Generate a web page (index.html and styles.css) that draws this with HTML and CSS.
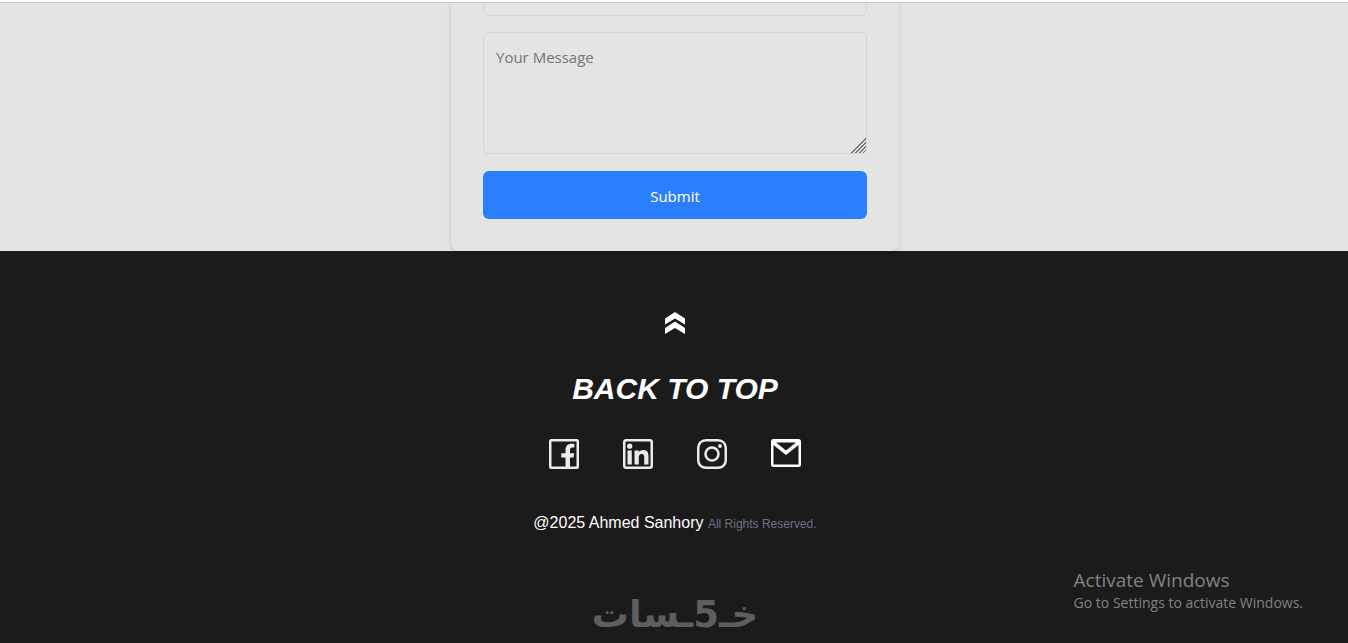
FILE: index.html
```html
<!DOCTYPE html>
<html lang="en">
<head>
<meta charset="utf-8">
<title>Contact</title>
<link rel="stylesheet" href="styles.css">
</head>
<body>
<div class="top-bar"></div>
<main class="contact">
  <form class="card">
    <input class="field" type="email" aria-label="Email">
    <textarea class="field message" placeholder="Your Message" aria-label="Your Message"></textarea>
    <button class="submit" type="submit">Submit</button>
  </form>
</main>
<footer class="footer">
  <a class="back" href="#">
    <svg class="chevrons" viewBox="0 0 20 22" aria-hidden="true"><path d="M0 6.500 10 0l10 6.500V12.500L10 6.500 0 12.500zM0 16 10 9.500 20 16v6l-10-6L0 22z"/></svg>
    <span class="back-title">BACK TO TOP</span>
  </a>
  <nav class="social" aria-label="Social links">
    <a href="#" aria-label="Facebook"><svg viewBox="0 0 30 30"><rect class="line" x="1.250" y="1.250" width="27.500" height="27.500" rx="1"/><path d="M16.500 29V18.500H12.300v-4.300h4.200v-3.400c0-4 2.300-6.100 6-6.100 1 0 2 .1 2.900.2v3.700h-2.100c-1.800 0-2.300 1-2.300 2.300v3.300h4.200l-.6 4.300H21V29z"/></svg></a>
    <a href="#" aria-label="LinkedIn"><svg viewBox="0 0 30 30"><rect class="line" x="1.250" y="1.250" width="27.500" height="27.500" rx="2"/><circle cx="6.700" cy="7.200" r="2.600"/><path d="M4.500 11.500h4.300V25.500H4.500zM11.500 11.500h4.200v1.900c.8-1.400 2.300-2.300 4.400-2.300 4.300 0 5.400 2.700 5.400 6.700v7.700h-4.300v-6.900c0-2-.3-3.700-2.500-3.700s-2.900 1.600-2.900 3.600v7h-4.300z"/></svg></a>
    <a href="#" aria-label="Instagram"><svg viewBox="0 0 30 30"><rect class="line" x="1.250" y="1.250" width="27.500" height="27.500" rx="7.500"/><circle class="line" cx="15" cy="15" r="6.500"/><circle cx="23" cy="7" r="1.900"/></svg></a>
    <a class="mail" href="#" aria-label="Email"><svg viewBox="0 0 30 30"><path fill-rule="evenodd" d="M2.500 0h25A2.500 2.500 0 0 1 30 2.500v23a2.500 2.500 0 0 1-2.500 2.500h-25A2.500 2.500 0 0 1 0 25.500v-23A2.500 2.500 0 0 1 2.500 0zM5 3.500 15 11.500 25 3.500zM2.500 6v19.500h25V6L15 16z"/></svg></a>
  </nav>
  <p class="copyright">@2025 Ahmed Sanhory <small class="rights">All Rights Reserved.</small></p>
  <div class="brand" lang="ar" dir="rtl">خـ5ـسات</div>
</footer>
<aside class="watermark">
  <div class="watermark-title">Activate Windows</div>
  <div class="watermark-text">Go to Settings to activate Windows.</div>
</aside>
</body>
</html>
```
FILE: styles.css
```css
* { box-sizing: border-box; }
body {
  margin: 0;
  min-height: 100vh;
  display: flex;
  flex-direction: column;
  overflow: hidden;
  background: #1b1b1b;
  font-family: "Liberation Sans", Arial, sans-serif;
}
.top-bar {
  position: relative;
  z-index: 2;
  flex: none;
  height: 3px;
  background: #fcfcfc;
  border-bottom: 1px solid #c8c8c8;
}
.contact {
  display: flex;
  justify-content: center;
  padding-left: 2px;
  background: #e4e4e4;
}
.card {
  position: relative;
  display: flex;
  flex-direction: column;
  gap: 16px;
  width: 100%;
  max-width: 448px;
  margin-top: -69px;
  padding: 32px;
  border-radius: 8px;
  background: #e4e4e4;
  box-shadow: 0 4px 6px -1px rgba(0, 0, 0, 0.1), 0 2px 4px -2px rgba(0, 0, 0, 0.1);
}
.field {
  display: block;
  width: 100%;
  height: 50px;
  padding: 12px;
  border: 1px solid #d1d5dc;
  border-radius: 6px;
  background: transparent;
  font: 15px/24px "Open Sans", "Noto Sans", sans-serif;
}
.message {
  height: 122px;
  margin-bottom: 1px;
  resize: vertical;
}
.message::-webkit-resizer {
  background: linear-gradient(135deg,
    transparent 49%, #77777c 49% 55%,
    transparent 55% 62%, #77777c 62% 68%,
    transparent 68% 75%, #77777c 75% 81%,
    transparent 81% 88%, #77777c 88% 92%,
    transparent 92%);
}
.field::placeholder { color: #757575; opacity: 1; }
.submit {
  height: 48px;
  padding: 2px 0 0;
  border: 0;
  border-radius: 6px;
  background: #2b7fff;
  color: #fff;
  font: 15px/24px "Open Sans", "Noto Sans", sans-serif;
}
.footer {
  flex: 1;
  display: flex;
  flex-direction: column;
  align-items: center;
  padding: 61px 0 0 2px;
  background: #1b1b1b;
  color: #fff;
}
.back {
  display: flex;
  flex-direction: column;
  align-items: center;
  gap: 36px;
  color: #fff;
  text-decoration: none;
}
.chevrons { width: 20px; height: 22px; fill: #fff; }
.back-title { font-size: 30px; line-height: 38px; font-weight: 700; font-style: italic; }
.social { display: flex; gap: 44px; margin-top: 31px; }
.social a { display: block; color: #ebebeb; }
.social .mail { color: #fff; }
.social svg { display: block; width: 30px; height: 30px; fill: currentColor; }
.social .line { fill: none; stroke: currentColor; stroke-width: 2.500; }
.copyright { margin: 42px 0 0; font-size: 16px; line-height: 24px; }
.rights { color: #6a7282; font-size: 12px; }
.brand {
  margin-top: 55px;
  color: #5e5e5e;
  font: 700 37px/48px "DejaVu Sans", sans-serif;
}
.watermark {
  position: absolute;
  right: 45px;
  bottom: 29px;
  color: #838383;
  font-family: "Open Sans", "Noto Sans", sans-serif;
}
.watermark-title { font-size: 19px; line-height: 24px; }
.watermark-text { font-size: 14px; line-height: 22px; }
```
